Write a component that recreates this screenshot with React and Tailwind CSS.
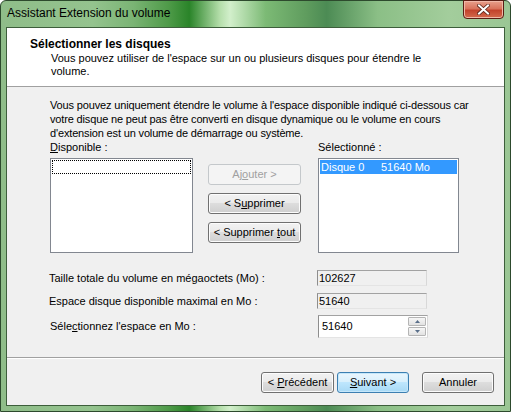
import React from "react";

const font = { fontFamily: '"Liberation Sans", Arial, sans-serif' };

function Btn({ children, className = "", disabled = false, def = false }) {
  const base =
    "flex items-center justify-center h-[21px] rounded-[3px] border text-[11px] leading-none";
  if (disabled) {
    return (
      <div className={`${base} border-[#c4c8cb] bg-[#f4f4f4] text-[#a0a0a0] ${className}`}>
        <span className="whitespace-pre">{children}</span>
      </div>
    );
  }
  if (def) {
    return (
      <div
        className={`${base} border-[#3c7fb1] bg-[linear-gradient(180deg,#eaf6fd_0%,#d9f0fc_45%,#bee6fd_50%,#a7d9f5_100%)] shadow-[inset_0_0_0_1px_#c5e7fa] text-black ${className}`}
      >
        <span className="whitespace-pre">{children}</span>
      </div>
    );
  }
  return (
    <div
      className={`${base} border-[#707070] bg-[linear-gradient(180deg,#f2f2f2_0%,#ebebeb_45%,#dddddd_50%,#cfcfcf_100%)] shadow-[inset_0_0_0_1px_#fcfcfc] text-black ${className}`}
    >
      <span className="whitespace-pre">{children}</span>
    </div>
  );
}

function ReadField({ value }) {
  return (
    <div className="w-[110px] h-[16px] bg-[#f0f0f0] border border-t-[#a2a2a2] border-l-[#8d8d8d] border-r-[#d8d8d8] border-b-[#e4e4e4] flex items-center pl-[1px] text-[11px] text-black">
      {value}
    </div>
  );
}

export default function App() {
  return (
    <div
      style={font}
      className="w-[511px] h-[412px] flex flex-col rounded-t-[6px] border border-[#2d4a2d] bg-[linear-gradient(90deg,#8fbd89_0%,#94c38e_18%,#7ab474_26%,#4e9a48_33%,#2a8429_37%,#b4deaa_43%,#d2efcb_45%,#7cba75_52%,#5f9c5e_60%,#4c8b54_64%,#8bbf86_74%,#a3cd9c_88%,#9ac694_100%)] px-[5px] pb-[5px] text-black"
    >
      {/* title bar */}
      <div className="h-[26px] flex items-start">
        <div className="pt-[5px] pl-[1px] text-[12px] leading-[14px] text-black">
          Assistant Extension du volume
        </div>
        <div className="ml-auto mr-[1px] mt-[-1px] w-[41px] h-[19px] rounded-b-[4px] border border-[#5a1d14] bg-[linear-gradient(180deg,#e8a08c_0%,#d9735c_45%,#c2432c_55%,#d46a4c_100%)] shadow-[inset_0_0_0_1px_#f0b8a8] flex items-center justify-center">
          <svg width="13" height="11" viewBox="0 0 13 11">
            <path
              d="M2 1.5 L11 9.5 M11 1.5 L2 9.5"
              stroke="#5a2418"
              strokeWidth="3.6"
              strokeLinecap="square"
            />
            <path
              d="M2 1.5 L11 9.5 M11 1.5 L2 9.5"
              stroke="#ffffff"
              strokeWidth="2"
              strokeLinecap="square"
            />
          </svg>
        </div>
      </div>

      {/* inner panel */}
      <div className="flex-1 flex flex-col border border-[#3d5e3b] bg-[#f0f0f0]">
        {/* header */}
        <div className="h-[59px] bg-white border-b border-[#a0a0a0] pl-[23px] pt-[9px]">
          <div className="text-[12px] font-bold leading-[14px]">Sélectionner les disques</div>
          <div className="pl-[21px] pt-[1px] text-[11px] leading-[13px]">
            <div className="whitespace-nowrap">
              Vous pouvez utiliser de l'espace sur un ou plusieurs disques pour étendre le
            </div>
            <div>volume.</div>
          </div>
        </div>

        {/* body */}
        <div className="flex-1 pl-[43px] pt-[11px] text-[11px]">
          <div className="leading-[14px] whitespace-nowrap tracking-[-0.15px]">
            <div>Vous pouvez uniquement étendre le volume à l'espace disponible indiqué ci-dessous car</div>
            <div>votre disque ne peut pas être converti en disque dynamique ou le volume en cours</div>
            <div>d'extension est un volume de démarrage ou système.</div>
          </div>

          <div className="grid grid-cols-[143px_93px_143px] gap-x-[15px] mt-0">
            <div className="leading-[14px] h-[18px]">
              <span className="underline">D</span>isponible :
            </div>
            <div />
            <div className="leading-[14px] h-[18px] ml-[2px]">Sélectionné :</div>

            <div className="h-[95px] bg-white border border-[#828790] p-[1px]">
              <div className="h-[14px] border border-dotted border-black" />
            </div>
            <div className="flex flex-col gap-[8px] pt-[6px]">
              <Btn disabled>
                Aj<span className="underline">o</span>uter &gt;
              </Btn>
              <Btn>
                &lt; S<span className="underline">u</span>pprimer
              </Btn>
              <Btn>
                &lt; Supprimer <span className="underline">t</span>out
              </Btn>
            </div>
            <div className="ml-[2px] h-[95px] bg-white border border-[#828790] p-[1px]">
              <div className="h-[14px] bg-[#3399ff] text-white flex items-center leading-none pl-[1px]">
                <span className="w-[60px]">Disque 0</span>
                <span>51640 Mo</span>
              </div>
            </div>
          </div>

          <div className="flex flex-col gap-[6px] mt-[17px]">
            <div className="flex items-center">
              <div className="w-[268px] -ml-[1px]">Taille totale du volume en mégaoctets (Mo) :</div>
              <ReadField value="102627" />
            </div>
            <div className="flex items-center">
              <div className="w-[268px] -ml-[1px]">Espace disque disponible maximal en Mo :</div>
              <ReadField value="51640" />
            </div>
            <div className="flex items-center">
              <div className="w-[268px]">
                Séle<span className="underline">c</span>tionnez l'espace en Mo :
              </div>
              <div className="w-[110px] h-[23px] bg-white border border-t-[#a2a2a2] border-l-[#8d8d8d] border-r-[#d8d8d8] border-b-[#e4e4e4] flex items-center">
                <div className="flex-1 pl-[3px]">51640</div>
                <div className="w-[18px] h-full flex flex-col gap-[1px] py-[1px] mr-[1px]">
                  <div className="flex-1 border border-[#b5b5b5] rounded-[1px] bg-[linear-gradient(180deg,#f6f6f6,#e2e2e2)] flex items-center justify-center">
                    <svg width="5" height="3" viewBox="0 0 5 3">
                      <path d="M0 3 L2.5 0 L5 3 Z" fill="#5a6f8a" />
                    </svg>
                  </div>
                  <div className="flex-1 border border-[#b5b5b5] rounded-[1px] bg-[linear-gradient(180deg,#f6f6f6,#e2e2e2)] flex items-center justify-center">
                    <svg width="5" height="3" viewBox="0 0 5 3">
                      <path d="M0 0 L2.5 3 L5 0 Z" fill="#5a6f8a" />
                    </svg>
                  </div>
                </div>
              </div>
            </div>
          </div>
        </div>

        {/* footer */}
        <div className="border-t border-[#a0a0a0] shadow-[inset_0_1px_0_#ffffff] h-[48px] flex items-start justify-end pt-[14px] pr-[10px] text-[11px]">
          <Btn className="w-[73px]">
            &lt; <span className="underline">P</span>récédent
          </Btn>
          <Btn def className="w-[72px] ml-[3px]">
            <span className="underline">S</span>uivant &gt;
          </Btn>
          <Btn className="w-[72px] ml-[13px]">Annuler</Btn>
        </div>
      </div>
    </div>
  );
}
